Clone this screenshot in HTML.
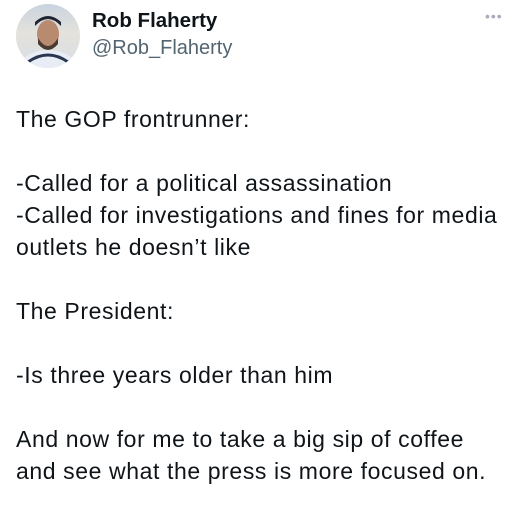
<!DOCTYPE html>
<html><head><meta charset="utf-8"><style>
html,body{margin:0;padding:0;background:#fff;width:526px;height:514px;overflow:hidden}
body{position:relative;font-family:"Liberation Sans",sans-serif;color:#0f1419}
.av{position:absolute;left:16px;top:4px;width:64px;height:64px;border-radius:50%;overflow:hidden;background:linear-gradient(#c9d3df,#e4e2dc 45%,#d9dde4)}
.name{position:absolute;left:92px;top:9px;font-weight:bold;font-size:20.5px}
.handle{position:absolute;left:92px;top:37px;font-size:20px;color:#536471}
.dots{position:absolute;left:485px;top:8px;font-size:14px;color:#aab;letter-spacing:1px}
.l{position:absolute;left:16px;font-size:23px;white-space:nowrap;letter-spacing:0.6px}
</style></head><body>
<div class="av">
<svg width="64" height="64" viewBox="0 0 64 64">
<ellipse cx="32" cy="66" rx="30" ry="20" fill="#e8ecf4"/>
<path d="M12 58 Q32 44 52 58" stroke="#2a3550" stroke-width="3" fill="none"/>
<ellipse cx="32" cy="30" rx="11" ry="14" fill="#b88a70"/>
<path d="M22 34 Q32 50 42 34 L42 40 Q32 52 22 40Z" fill="#4a3a32"/>
<path d="M19 22 Q32 8 45 22 L45 18 Q32 6 19 18Z" fill="#1e2430"/>
</svg></div>
<div class="name">Rob Flaherty</div>
<div class="handle">@Rob_Flaherty</div>
<div class="dots">•••</div>
<div class="l" style="top:106px">The GOP frontrunner:</div>
<div class="l" style="top:170px">-Called for a political assassination</div>
<div class="l" style="top:202px">-Called for investigations and fines for media</div>
<div class="l" style="top:234px">outlets he doesn’t like</div>
<div class="l" style="top:298px">The President:</div>
<div class="l" style="top:362px">-Is three years older than him</div>
<div class="l" style="top:426px">And now for me to take a big sip of coffee</div>
<div class="l" style="top:458px">and see what the press is more focused on.</div>
</body></html>
